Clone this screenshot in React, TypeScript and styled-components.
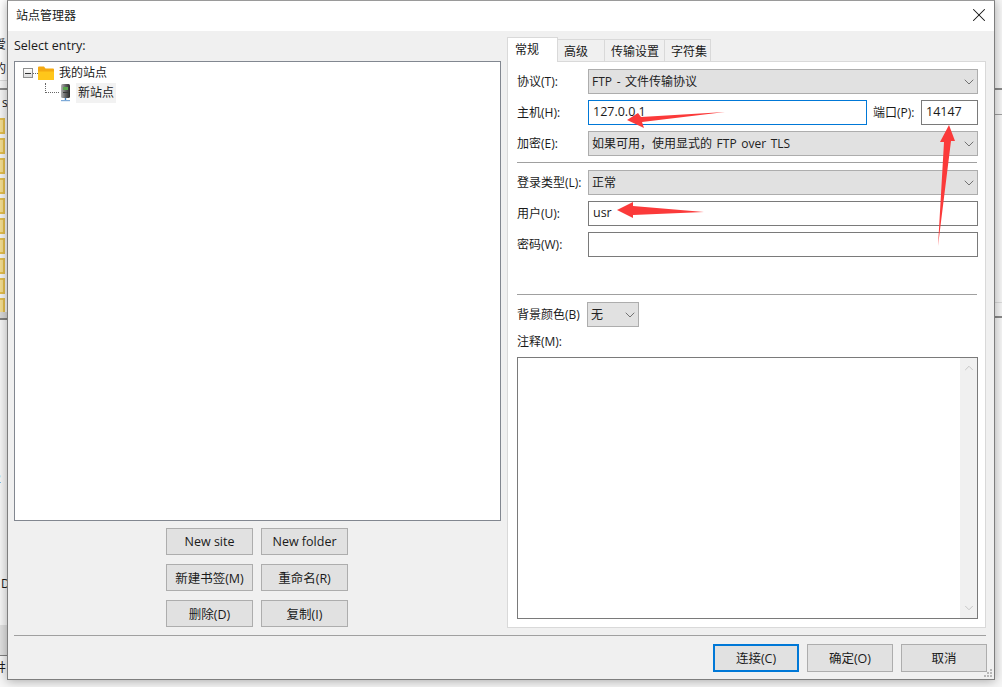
import React from 'react';
import styled, { createGlobalStyle } from 'styled-components';
import { ChevronDown, ChevronUp, X } from 'lucide-react';

const GlobalStyle = createGlobalStyle`
  html, body {
    margin: 0;
    padding: 0;
    width: 1002px;
    height: 687px;
    overflow: hidden;
    background: #ffffff;
  }
  * {
    box-sizing: border-box;
  }
  body {
    font-family: "Open Sans", "Noto Sans CJK SC", sans-serif;
    font-size: 12px;
    color: #1a1a1a;
  }
`;

const Desktop = styled.div`
  position: relative;
  width: 1002px;
  height: 687px;
  overflow: hidden;
  background: #f6f6f6;
`;

const BackdropText = styled.span<{ $top: number; $left?: number }>`
  position: absolute;
  left: ${(p) => p.$left ?? -6}px;
  top: ${(p) => p.$top}px;
  font-size: 12px;
  line-height: 14px;
`;

const BackdropLine = styled.div<{ $top: number; $height?: number; $color?: string; $right?: boolean }>`
  position: absolute;
  ${(p) => (p.$right ? 'right: 0; width: 8px;' : 'left: 0; width: 8px;')}
  top: ${(p) => p.$top}px;
  height: ${(p) => p.$height ?? 1}px;
  background: ${(p) => p.$color ?? '#a0a0a0'};
`;

const BackdropFolders = styled.div`
  position: absolute;
  left: -7px;
  top: 118px;
  display: flex;
  flex-direction: column;
  gap: 4px;
`;

const BackdropFolder = styled.div`
  width: 12px;
  height: 16px;
  background: #f3dc90;
  border: 2px solid #e2bd4d;
`;

const Window = styled.div`
  position: absolute;
  left: 7px;
  top: 0;
  width: 988px;
  height: 680px;
  display: flex;
  flex-direction: column;
  background: #f0f0f0;
  border: 1px solid #7e7e7e;
  border-top-color: #9a9a9a;
  box-shadow: 0 1px 10px rgba(0, 0, 0, 0.32);
`;

const TitleBar = styled.div`
  flex: none;
  height: 30px;
  background: #ffffff;
  display: flex;
  align-items: center;
  justify-content: space-between;
  padding: 0 4px 2px 8px;
  font-size: 12px;
`;

const CloseButton = styled.div`
  display: flex;
  align-items: center;
  color: #111111;
`;

const Content = styled.div`
  flex: none;
  height: 604px;
  display: flex;
  gap: 6px;
  padding: 0 8px 0 6px;
`;

const LeftPane = styled.div`
  width: 487px;
  display: flex;
  flex-direction: column;
`;

const EntryLabel = styled.div`
  height: 30px;
  padding-top: 7px;
  font-size: 12.5px;
  line-height: 16px;
`;

const TreeBox = styled.div`
  height: 460px;
  background: #ffffff;
  border: 1px solid #828790;
  padding: 1px 0 0 8px;
`;

const TreeRow = styled.div<{ $indent?: number }>`
  display: flex;
  align-items: center;
  height: 20px;
  margin-left: ${(p) => p.$indent ?? 0}px;
`;

const Expander = styled.div`
  width: 10px;
  height: 10px;
  border: 1px solid #8e8f8f;
  background: linear-gradient(#ffffff, #dcdcdc);
  display: flex;
  align-items: center;
  justify-content: center;
  flex: none;
  &::after {
    content: '';
    width: 6px;
    height: 1px;
    background: #333333;
  }
`;

const TreeDots = styled.div`
  width: 5px;
  border-top: 1px dotted #666666;
  flex: none;
`;

const ElbowDots = styled.div`
  width: 14px;
  height: 10px;
  margin-top: -10px;
  border-left: 1px dotted #666666;
  border-bottom: 1px dotted #666666;
  flex: none;
`;

const NodeLabel = styled.span<{ $selected?: boolean }>`
  margin-left: ${(p) => (p.$selected ? 5 : 3)}px;
  padding: 0 2px;
  height: 20px;
  line-height: 20px;
  background: ${(p) => (p.$selected ? '#f2f2f2' : 'transparent')};
`;

const ButtonGrid = styled.div`
  display: grid;
  grid-template-columns: 87px 87px;
  grid-auto-rows: 27px;
  gap: 9px 8px;
  justify-content: center;
  margin-top: 7px;
  padding-right: 1px;
`;

const ActionButton = styled.button<{ $focused?: boolean }>`
  height: 27px;
  padding: 0;
  background: #e1e1e1;
  border: ${(p) => (p.$focused ? '2px solid #0078d7' : '1px solid #adadad')};
  color: #1a1a1a;
  font: inherit;
  font-size: 12.5px;
`;

const RightPane = styled.div`
  width: 479px;
  margin-top: 6px;
  display: flex;
  flex-direction: column;
`;

const TabStrip = styled.div`
  display: flex;
  height: 25px;
  align-items: flex-end;
  position: relative;
  z-index: 1;
`;

const Tab = styled.div<{ $active?: boolean; $width: number }>`
  width: ${(p) => p.$width}px;
  height: ${(p) => (p.$active ? 25 : 23)}px;
  padding: ${(p) => (p.$active ? '0 0 3px 7px' : '0 0 0 6px')};
  display: flex;
  align-items: center;
  background: ${(p) => (p.$active ? '#ffffff' : '#f0f0f0')};
  border: 1px solid #d9d9d9;
  border-left-width: ${(p) => (p.$active ? 1 : 0)}px;
  border-bottom-width: ${(p) => (p.$active ? 0 : 1)}px;
`;

const TabPanel = styled.div`
  width: 479px;
  height: 567px;
  margin-top: -1px;
  background: #ffffff;
  border: 1px solid #d9d9d9;
  padding: 7px 7px 0 9px;
  display: flex;
  flex-direction: column;
`;

const FormRow = styled.div<{ $mt?: number }>`
  display: flex;
  align-items: center;
  margin-top: ${(p) => p.$mt ?? 0}px;
`;

const FieldLabel = styled.span<{ $width?: number }>`
  width: ${(p) => p.$width ?? 71}px;
  flex: none;
  padding-bottom: 2px;
  white-space: nowrap;
`;

const Dropdown = styled.div<{ $width?: number }>`
  width: ${(p) => (p.$width ? `${p.$width}px` : '100%')};
  flex: ${(p) => (p.$width ? 'none' : '1')};
  height: 25px;
  background: #e1e1e1;
  border: 1px solid #adadad;
  display: flex;
  align-items: center;
  justify-content: space-between;
  padding: 0 0 2px 3px;
  font-size: 12px;
  word-spacing: 1.5px;
  color: #222222;
`;

const DropChevron = styled(ChevronDown)`
  flex: none;
  margin-bottom: -2px;
  color: #555555;
`;

const TextField = styled.input<{ $focused?: boolean; $width?: number }>`
  width: ${(p) => (p.$width ? `${p.$width}px` : '100%')};
  flex: ${(p) => (p.$width ? 'none' : '1')};
  min-width: 0;
  height: 25px;
  padding: 0 4px 2px;
  background: #ffffff;
  border: 1px solid ${(p) => (p.$focused ? '#0078d7' : '#7a7a7a')};
  outline: none;
  border-radius: 0;
  font: inherit;
  font-size: 12.5px;
  color: #1a1a1a;
`;

const PortLabel = styled.span`
  width: 54px;
  flex: none;
  padding: 0 0 2px 6px;
  white-space: nowrap;
`;

const Separator = styled.div<{ $mt: number }>`
  height: 1px;
  background: #a0a0a0;
  margin: ${(p) => p.$mt}px 1px 0 0;
`;

const NotesLabel = styled.div`
  margin-top: 7px;
  height: 16px;
  line-height: 16px;
`;

const NotesBox = styled.div`
  margin-top: 7px;
  height: 262px;
  border: 1px solid #7a7a7a;
  display: flex;
  justify-content: flex-end;
  background: #ffffff;
`;

const ScrollBar = styled.div`
  width: 17px;
  background: #f0f0f0;
  display: flex;
  flex-direction: column;
  justify-content: space-between;
  align-items: center;
  padding: 3px 0;
  color: #c0c0c0;
`;

const FooterRule = styled.div`
  height: 1px;
  background: #a0a0a0;
  margin: 0 0 0 6px;
  width: 972px;
`;

const Footer = styled.div`
  display: flex;
  justify-content: flex-end;
  gap: 8px;
  padding: 8px 7px 0 0;
`;

const FooterButton = styled(ActionButton)`
  width: 86px;
  height: 28px;
  padding-bottom: 2px;
`;

const Grip = styled.svg`
  position: absolute;
  right: 1px;
  bottom: 1px;
`;

const ArrowLayer = styled.svg`
  position: absolute;
  left: 0;
  top: 0;
  pointer-events: none;
`;

const FolderIcon = () => (
  <svg width="16" height="14" viewBox="0 0 16 14">
    <path d="M0 1.5 Q0 0.5 1 0.5 H6 L7.5 2.5 H15 Q16 2.5 16 3.5 V13 Q16 14 15 14 H1 Q0 14 0 13 Z" fill="#f4a911" />
    <path d="M0 5.5 H16 V13 Q16 14 15 14 H1 Q0 14 0 13 Z" fill="#ffc61a" />
  </svg>
);

const ServerIcon = () => (
  <svg width="12" height="18" viewBox="0 0 12 18">
    <defs>
      <linearGradient id="serverBody" x1="0" x2="1" y1="0" y2="0">
        <stop offset="0" stopColor="#b4b4b4" />
        <stop offset="0.45" stopColor="#6a6a6a" />
        <stop offset="1" stopColor="#2a2a2a" />
      </linearGradient>
    </defs>
    <rect x="2" y="0" width="9" height="14" rx="1.5" fill="url(#serverBody)" />
    <rect x="4" y="3" width="5" height="3" fill="#5aa64e" />
    <rect x="4" y="8" width="5" height="1" fill="#3a3a3a" />
    <rect x="5.8" y="14" width="1.4" height="2.5" fill="#3f7cbf" />
    <rect x="2" y="16" width="9" height="1.2" fill="#7eaad8" />
  </svg>
);

const App: React.FC = () => {
  return (
    <Desktop>
      <GlobalStyle />
      <BackdropLine $top={0} $color="#ffffff" $height={80} />
      <BackdropText $top={38}>爱</BackdropText>
      <BackdropText $top={62}>的</BackdropText>
      <BackdropLine $top={80} $color="#dcdcdc" />
      <BackdropLine $top={88} $color="#8a8a8a" $height={2} />
      <BackdropText $top={96} $left={2}>s</BackdropText>
      <BackdropFolders>
        {Array.from({ length: 10 }, (_, i) => (
          <BackdropFolder key={i} />
        ))}
      </BackdropFolders>
      <BackdropLine $top={312} $color="#d8d8d8" $height={6} />
      <BackdropLine $top={318} $color="#808080" $height={2} />
      <BackdropText $top={472}>2</BackdropText>
      <BackdropText $top={577} $left={1}>D</BackdropText>
      <BackdropLine $top={625} $color="#e0e0e0" $height={30} />
      <BackdropLine $top={655} $color="#808080" />
      <BackdropText $top={661} $left={-6}>井</BackdropText>
      <BackdropLine $right $top={88} $color="#8a8a8a" $height={2} />
      <BackdropLine $right $top={114} $color="#a0a0a0" />
      <BackdropLine $right $top={302} $color="#dcdcdc" />
      <BackdropLine $right $top={316} $color="#8a8a8a" $height={2} />

      <Window>
        <TitleBar>
          <span>站点管理器</span>
          <CloseButton>
            <X size={22} strokeWidth={1.1} />
          </CloseButton>
        </TitleBar>
        <Content>
          <LeftPane>
            <EntryLabel>Select entry:</EntryLabel>
            <TreeBox>
              <TreeRow>
                <Expander />
                <TreeDots />
                <FolderIcon />
                <NodeLabel>我的站点</NodeLabel>
              </TreeRow>
              <TreeRow $indent={22}>
                <ElbowDots />
                <ServerIcon />
                <NodeLabel $selected>新站点</NodeLabel>
              </TreeRow>
            </TreeBox>
            <ButtonGrid>
              <ActionButton>New site</ActionButton>
              <ActionButton>New folder</ActionButton>
              <ActionButton>新建书签(M)</ActionButton>
              <ActionButton>重命名(R)</ActionButton>
              <ActionButton>删除(D)</ActionButton>
              <ActionButton>复制(I)</ActionButton>
            </ButtonGrid>
          </LeftPane>
          <RightPane>
            <TabStrip>
              <Tab $active $width={51}>常规</Tab>
              <Tab $width={47}>高级</Tab>
              <Tab $width={60}>传输设置</Tab>
              <Tab $width={46}>字符集</Tab>
            </TabStrip>
            <TabPanel>
              <FormRow>
                <FieldLabel>协议(T):</FieldLabel>
                <Dropdown>
                  FTP - 文件传输协议
                  <DropChevron size={16} strokeWidth={1.2} />
                </Dropdown>
              </FormRow>
              <FormRow $mt={6}>
                <FieldLabel>主机(H):</FieldLabel>
                <TextField $focused readOnly value="127.0.0.1" />
                <PortLabel>端口(P):</PortLabel>
                <TextField $width={57} readOnly value="14147" />
              </FormRow>
              <FormRow $mt={6}>
                <FieldLabel>加密(E):</FieldLabel>
                <Dropdown>
                  如果可用，使用显式的 FTP over TLS
                  <DropChevron size={16} strokeWidth={1.2} />
                </Dropdown>
              </FormRow>
              <Separator $mt={6} />
              <FormRow $mt={7}>
                <FieldLabel>登录类型(L):</FieldLabel>
                <Dropdown>
                  正常
                  <DropChevron size={16} strokeWidth={1.2} />
                </Dropdown>
              </FormRow>
              <FormRow $mt={6}>
                <FieldLabel>用户(U):</FieldLabel>
                <TextField readOnly value="usr" />
              </FormRow>
              <FormRow $mt={6}>
                <FieldLabel>密码(W):</FieldLabel>
                <TextField readOnly value="" />
              </FormRow>
              <Separator $mt={37} />
              <FormRow $mt={7}>
                <FieldLabel $width={70}>背景颜色(B)</FieldLabel>
                <Dropdown $width={52}>
                  无
                  <DropChevron size={16} strokeWidth={1.2} />
                </Dropdown>
              </FormRow>
              <NotesLabel>注释(M):</NotesLabel>
              <NotesBox>
                <ScrollBar>
                  <ChevronUp size={14} strokeWidth={1.5} />
                  <ChevronDown size={14} strokeWidth={1.5} />
                </ScrollBar>
              </NotesBox>
            </TabPanel>
          </RightPane>
        </Content>
        <FooterRule />
        <Footer>
          <FooterButton $focused>连接(C)</FooterButton>
          <FooterButton>确定(O)</FooterButton>
          <FooterButton>取消</FooterButton>
        </Footer>
        <Grip width="10" height="10" viewBox="0 0 10 10">
          <g fill="#b8b8b8">
            <rect x="7" y="1" width="2" height="2" />
            <rect x="4" y="4" width="2" height="2" />
            <rect x="7" y="4" width="2" height="2" />
            <rect x="1" y="7" width="2" height="2" />
            <rect x="4" y="7" width="2" height="2" />
            <rect x="7" y="7" width="2" height="2" />
          </g>
        </Grip>
      </Window>

      <ArrowLayer width="1002" height="687" viewBox="0 0 1002 687">
        <g fill="#fb3a3a">
          <polygon points="725,112 641,117 638,113 627,120 644,128 642,122" />
          <polygon points="617,210 633,202 633,206 704,212 633,215 633,218" />
          <polygon points="949,125 955,141 951,141 938,246 944,142 940,142" />
        </g>
      </ArrowLayer>
    </Desktop>
  );
};

export default App;
